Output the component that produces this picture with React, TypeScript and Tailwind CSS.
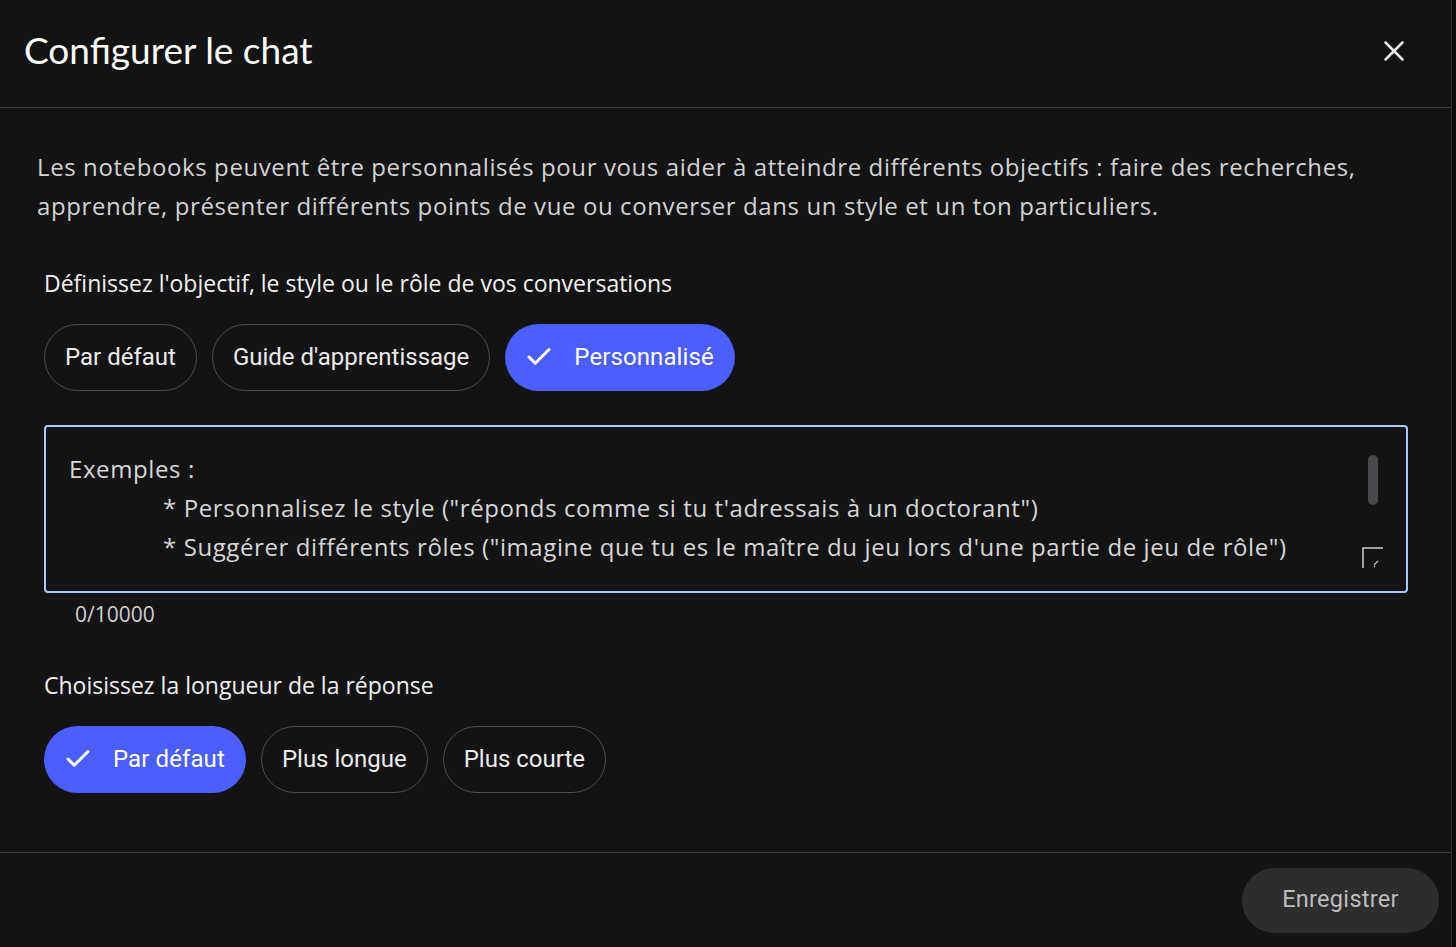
import { Check, X } from "lucide-react";

type Chip = { label: string; selected?: boolean };

const GOALS: Chip[] = [
  { label: "Par défaut" },
  { label: "Guide d'apprentissage" },
  { label: "Personnalisé", selected: true },
];

const LENGTHS: Chip[] = [
  { label: "Par défaut", selected: true },
  { label: "Plus longue" },
  { label: "Plus courte" },
];

function ChipRow({ chips }: { chips: Chip[] }) {
  return (
    <div className="flex gap-[15px]">
      {chips.map((chip) =>
        chip.selected ? (
          <button
            key={chip.label}
            className="flex h-[67px] items-center gap-[20px] rounded-full bg-[#4a5ffb] pl-[19px] pr-[21px] text-[24px] text-white font-['Roboto',sans-serif] tracking-[0.1px]"
          >
            <Check size={30} strokeWidth={2.4} />
            {chip.label}
          </button>
        ) : (
          <button
            key={chip.label}
            className="flex h-[67px] items-center rounded-full border border-[#4d4d4d] px-[20px] text-[24px] text-[#ececec] font-['Roboto',sans-serif]"
          >
            {chip.label}
          </button>
        )
      )}
    </div>
  );
}

export default function App() {
  return (
    <div className="flex h-[947px] w-[1456px] bg-[#0c0c0c] font-['Open_Sans',sans-serif]">
      <div className="flex w-[1452px] flex-col border-r border-[#2c2c2c] bg-[#131313]">
        {/* en-tête */}
        <div className="flex h-[108px] shrink-0 items-center justify-between border-b border-[#3a3a3a] pl-[24px] pr-[40px]">
          <h1 className="pb-[8px] text-[37px] text-white font-['Lato',sans-serif]">Configurer le chat</h1>
          <X size={34} strokeWidth={1.8} className="text-[#e6e6e6] mb-[6px]" />
        </div>

        {/* contenu */}
        <div className="flex flex-1 flex-col pl-[37px] pr-[43px] pt-[39px]">
          <p className="text-[24px] leading-[39px] tracking-[0.6px] text-[#d2d2d2]">
            Les notebooks peuvent être personnalisés pour vous aider à atteindre différents objectifs : faire des recherches,
            <br />
            apprendre, présenter différents points de vue ou converser dans un style et un ton particuliers.
          </p>

          <div className="pl-[7px]">
            <h2 className="mt-[41px] text-[23px] font-medium text-[#f2f2f2]">
              Définissez l'objectif, le style ou le rôle de vos conversations
            </h2>
            <div className="mt-[23px]">
              <ChipRow chips={GOALS} />
            </div>

            {/* zone de saisie */}
            <div className="relative mt-[34px] h-[168px] rounded-[4px] border-2 border-[#a8c7fa] pl-[23px] pt-[22px] text-[24px] leading-[39px] tracking-[0.6px] text-[#d6d6d6]">
              <div>Exemples :</div>
              <div className="pl-[94px]">* Personnalisez le style ("réponds comme si tu t'adressais à un doctorant")</div>
              <div className="pl-[94px]">
                * Suggérer différents rôles ("imagine que tu es le maître du jeu lors d'une partie de jeu de rôle")
              </div>
              <div className="absolute right-[28px] top-[28px] h-[50px] w-[10px] rounded-full bg-[#48484d]" />
              <svg className="absolute bottom-[22px] right-[22px]" width="22" height="22" viewBox="0 0 22 22">
                <path d="M1 21 V1 H21" fill="none" stroke="#d0d0d0" strokeWidth="1.5" />
                <path d="M12 18 L16 14 M12 20 L13 19" fill="none" stroke="#bdbdbd" strokeWidth="1.2" />
              </svg>
            </div>
            <div className="mt-[6px] pl-[31px] text-[21px] text-[#d0d0d0]">0/10000</div>

            <h2 className="mt-[38px] text-[23px] font-medium text-[#f2f2f2]">Choisissez la longueur de la réponse</h2>
            <div className="mt-[23px]">
              <ChipRow chips={LENGTHS} />
            </div>
          </div>
        </div>

        {/* pied */}
        <div className="flex h-[95px] shrink-0 items-center justify-end border-t border-[#3a3a3a] pr-[12px]">
          <button className="h-[65px] w-[197px] rounded-full bg-[#2d2d2d] text-[23.5px] text-[#bcbcbc] font-['Roboto',sans-serif] tracking-[0.3px]">
            Enregistrer
          </button>
        </div>
      </div>
    </div>
  );
}
